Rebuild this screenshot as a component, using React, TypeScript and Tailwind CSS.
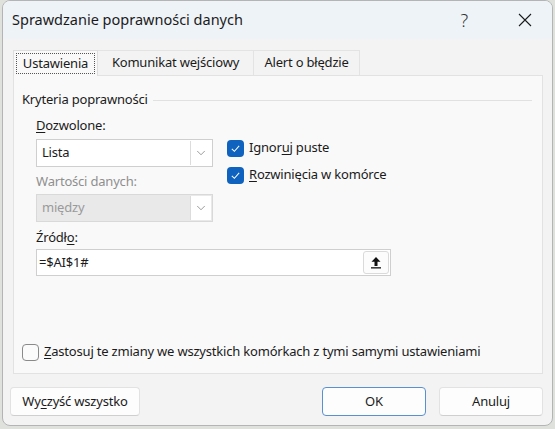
import { ChevronDown } from "lucide-react";

function Check({ checked }: { checked: boolean }) {
  return checked ? (
    <span className="flex h-[17px] w-[17px] items-center justify-center rounded-[4px] bg-[#0f62be]">
      <svg width="11" height="11" viewBox="0 0 12 12" fill="none">
        <path d="M2 6.3 4.8 9 10 3.2" stroke="white" strokeWidth="1.1" />
      </svg>
    </span>
  ) : (
    <span className="h-[17px] w-[17px] rounded-[4px] border border-[#8a8a8a] bg-[#fbfbfb]" />
  );
}

function Select({ value, disabled }: { value: string; disabled?: boolean }) {
  return (
    <div
      className={`flex h-[28px] w-[177px] border ${
        disabled ? "border-[#d9d9d9] bg-[#e9e9e9] text-[#9a9a9a]" : "border-[#cfcfcf] bg-white"
      }`}
    >
      <span className="flex flex-1 items-center pl-[5px]">{value}</span>
      <span className="m-[1px] flex w-[21px] items-center justify-center border-l border-[#dcdcdc] bg-white">
        <ChevronDown size={14} strokeWidth={1} className="text-[#555]" />
      </span>
    </div>
  );
}

function Button({ children, primary, className }: { children: React.ReactNode; primary?: boolean; className: string }) {
  return (
    <button
      className={`flex h-[29px] items-center justify-center rounded-[4px] bg-[#fdfdfd] ${
        primary ? "border border-[#5a8fd0]" : "border border-[#e2e2e2] border-b-[#cfcfcf]"
      } ${className}`}
    >
      {children}
    </button>
  );
}

export default function App() {
  return (
    <div className="h-[429px] w-[555px] overflow-hidden bg-[#dfe2dc] font-['Noto_Sans',sans-serif] text-[13px] tracking-[-0.2px] text-[#1b1b1b]">
      <div className="ml-[2px] flex h-[426px] w-[551px] flex-col overflow-hidden rounded-[8px] border border-[#b4b4b4] bg-[#f3f3f3]">
        {/* title bar */}
        <div className="flex h-[38px] items-center bg-[#eef3f8] pl-[9px] pr-[20px]">
          <span className="text-[14.5px] tracking-normal">Sprawdzanie poprawności danych</span>
          <span className="ml-auto mr-[50px] text-[18px] font-light text-[#333]">?</span>
          <svg width="14" height="14" viewBox="0 0 14 14" className="mb-[1px]">
            <path d="M1 1 13 13M13 1 1 13" stroke="#1b1b1b" strokeWidth="1.1" />
          </svg>
        </div>

        {/* tabs */}
        <div className="ml-[10px] mt-[11px] flex h-[25px] items-end">
          <div className="relative z-10 -mb-px h-[26px] w-[85px] border border-b-0 border-[#dedede] bg-[#f9f9f9] p-[2px]">
            <div className="flex h-full items-center justify-center border border-dotted border-[#555]">
              Ustawienia
            </div>
          </div>
          <div className="flex h-[25px] w-[156px] items-center justify-center border-t border-r border-[#e3e3e3]">
            Komunikat wejściowy
          </div>
          <div className="flex h-[25px] w-[106px] items-center justify-center border-t border-r border-[#e3e3e3]">
            Alert o błędzie
          </div>
        </div>

        {/* tab page */}
        <div className="ml-[10px] flex h-[299px] w-[530px] flex-col border border-[#e2e2e2] bg-[#f9f9f9]">
          <div className="mt-[15px] flex h-[18px] items-center gap-[5px] pl-[8px] pr-[10px]">
            <span>Kryteria poprawności</span>
            <span className="h-px flex-1 bg-[#e1e1e1]" />
          </div>

          <div className="flex pl-[22px]">
            <div className="flex w-[177px] flex-col">
              <span className="mt-[8px] flex h-[18px] items-center">
                <span className="underline underline-offset-2">D</span>ozwolone:
              </span>
              <div className="mt-[4px]">
                <Select value="Lista" />
              </div>
              <span className="mt-[6px] flex h-[18px] items-center text-[#8f8f8f]">Wartości danych:</span>
              <div className="mt-[3px]">
                <Select value="między" disabled />
              </div>
            </div>

            <div className="ml-[14px] flex flex-col">
              <label className="mt-[30px] flex h-[18px] items-center gap-[5px]">
                <Check checked />
                <span>
                  Ignor<span className="underline underline-offset-2">u</span>j puste
                </span>
              </label>
              <label className="mt-[9px] flex h-[18px] items-center gap-[5px]">
                <Check checked />
                <span>
                  <span className="underline underline-offset-2">R</span>ozwinięcia w komórce
                </span>
              </label>
            </div>
          </div>

          <div className="flex flex-col pl-[22px]">
            <span className="mt-[7px] flex h-[18px] items-center">
              Źródł<span className="underline underline-offset-2">o</span>:
            </span>
            <div className="mt-[2px] flex h-[27px] w-[355px] border border-[#cfcfcf] bg-white">
              <span className="flex flex-1 items-center pl-[2px]">=$AI$1#</span>
              <span className="m-[1px] flex w-[26px] items-center justify-center rounded-[3px] border border-[#dadada] bg-[#fcfcfc]">
                <svg width="12" height="13" viewBox="0 0 12 13">
                  <path d="M6 1 1.5 5.8h3V10h3V5.8h3z" fill="#111" />
                  <rect x="1" y="11.2" width="10" height="1.3" fill="#111" />
                </svg>
              </span>
            </div>
          </div>

          <label className="mb-[12px] mt-auto flex h-[18px] items-center gap-[5px] pl-[8px]">
            <Check checked={false} />
            <span>
              <span className="underline underline-offset-2">Z</span>astosuj te zmiany we wszystkich komórkach z tymi
              samymi ustawieniami
            </span>
          </label>
        </div>

        {/* footer buttons */}
        <div className="mt-[13px] flex pl-[7px] pr-[9px]">
          <Button className="w-[130px]">
            Wy<span className="underline underline-offset-2">c</span>zyść wszystko
          </Button>
          <Button primary className="ml-auto w-[104px]">
            OK
          </Button>
          <Button className="ml-[13px] w-[104px]">Anuluj</Button>
        </div>
      </div>
    </div>
  );
}
